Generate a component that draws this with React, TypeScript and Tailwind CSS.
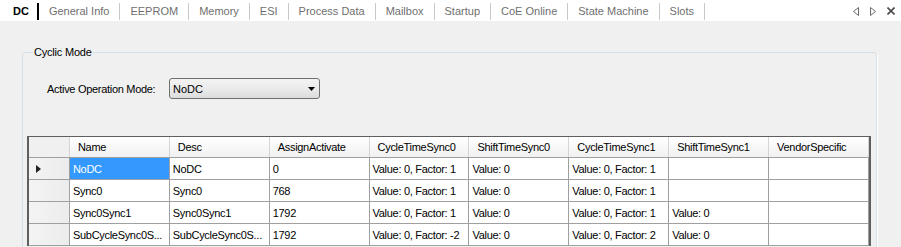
import React from "react";

const tabs = [
  "General Info",
  "EEPROM",
  "Memory",
  "ESI",
  "Process Data",
  "Mailbox",
  "Startup",
  "CoE Online",
  "State Machine",
  "Slots",
];

const columns = [
  "Name",
  "Desc",
  "AssignActivate",
  "CycleTimeSync0",
  "ShiftTimeSync0",
  "CycleTimeSync1",
  "ShiftTimeSync1",
  "VendorSpecific",
];

const rows: string[][] = [
  ["NoDC", "NoDC", "0", "Value: 0, Factor: 1", "Value: 0", "Value: 0, Factor: 1", "", ""],
  ["Sync0", "Sync0", "768", "Value: 0, Factor: 1", "Value: 0", "Value: 0, Factor: 1", "", ""],
  ["Sync0Sync1", "Sync0Sync1", "1792", "Value: 0, Factor: 1", "Value: 0", "Value: 0, Factor: 1", "Value: 0", ""],
  ["SubCycleSync0S...", "SubCycleSync0S...", "1792", "Value: 0, Factor: -2", "Value: 0", "Value: 0, Factor: 2", "Value: 0", ""],
];

const TabBar: React.FC = () => (
  <div className="h-[21px] bg-white flex items-start pl-[3px] text-[11px]">
    <div className="h-[21px] flex items-center pt-[2px] pl-[10px] pr-[8px] font-bold text-black">DC</div>
    <div className="w-[2px] h-[17px] mt-[3px] bg-black" />
    {tabs.map((t) => (
      <React.Fragment key={t}>
        <div className="h-[21px] flex items-center pt-[2px] px-[10px] text-[#6f6f6f]">{t}</div>
        <div className="w-px h-[17px] mt-[3px] bg-[#c9c9c9]" />
      </React.Fragment>
    ))}
    <div className="ml-auto flex items-center h-[21px] pt-[1px] gap-[11px] pr-[6px]">
      <svg width="6" height="9" viewBox="0 0 6 9">
        <path d="M5.5 0.5 L0.5 4.5 L5.5 8.5 Z" fill="none" stroke="#6a6a6a" strokeWidth="1" />
      </svg>
      <svg width="6" height="9" viewBox="0 0 6 9">
        <path d="M0.5 0.5 L5.5 4.5 L0.5 8.5 Z" fill="none" stroke="#6a6a6a" strokeWidth="1" />
      </svg>
      <svg width="8" height="8" viewBox="0 0 8 8">
        <path d="M0.5 0.5 L7.5 7.5 M7.5 0.5 L0.5 7.5" stroke="#4a4a4a" strokeWidth="1.6" />
      </svg>
    </div>
  </div>
);

const ComboBox: React.FC = () => (
  <div className="w-[151px] h-[21px] rounded-[3px] border border-[#707070] bg-gradient-to-b from-[#f3f3f3] via-[#ebebeb] to-[#dcdcdc] flex items-center pt-[1px] pl-[3px] pr-[4px]">
    <span className="flex-1 text-black">NoDC</span>
    <svg width="7" height="4" viewBox="0 0 7 4">
      <path d="M0 0 L7 0 L3.5 4 Z" fill="#000" />
    </svg>
  </div>
);

const Grid: React.FC = () => (
  <div className="w-[844px] border-l-2 border-t border-r-2 border-[#5f5f5f] bg-[#ababab]">
    <div className="flex h-[21px] border-b border-[#a0a0a0] bg-gradient-to-b from-white to-[#f1f1f1]">
      <div className="w-[41px] border-r border-[#d5d5d5] bg-[#f0f0f0]" />
      {columns.map((c) => (
        <div
          key={c}
          className="w-[100px] border-r border-[#d5d5d5] flex items-center pt-[1px] pl-[8px] text-black tracking-[-0.3px]"
        >
          {c}
        </div>
      ))}
    </div>
    {rows.map((r, i) => (
      <div key={i} className="flex h-[22px] border-b border-[#a0a0a0] bg-white">
        <div className="w-[41px] border-r border-[#a0a0a0] bg-gradient-to-r from-[#f4f4f4] to-[#ececec] flex items-center pt-[1px] pl-[7px]">
          {i === 0 && (
            <svg width="5" height="8" viewBox="0 0 5 8">
              <path d="M0 0 L5 4 L0 8 Z" fill="#222" />
            </svg>
          )}
        </div>
        {r.map((v, j) => (
          <div
            key={j}
            className={`w-[100px] border-r border-[#a0a0a0] flex items-center pt-[2px] pl-[3px] whitespace-nowrap overflow-hidden tracking-[-0.3px] ${
              i === 0 && j === 0 ? "bg-[#3399ff] text-white" : "text-black"
            }`}
          >
            {v}
          </div>
        ))}
      </div>
    ))}
  </div>
);

export default function App() {
  return (
    <div className="w-[901px] h-[247px] overflow-hidden bg-[#f0f0f0] font-['Liberation_Sans',Arial,sans-serif] text-[11px] leading-[13px]">
      <TabBar />
      <div className="pl-[22px] pr-[24px] pt-[25px]">
        <fieldset className="border border-[#d5dfe5] rounded-[3px] shadow-[1px_1px_0_#ffffff] pl-[4px] pr-[4px] pb-[20px] m-0">
          <legend className="ml-[6px] px-[1px] text-black tracking-[-0.2px]">Cyclic Mode</legend>
          <div className="flex items-center mt-[19px] pl-[20px]">
            <span className="w-[122px] pt-[1px] text-black tracking-[-0.3px]">Active Operation Mode:</span>
            <ComboBox />
          </div>
          <div className="mt-[37px]">
            <Grid />
          </div>
        </fieldset>
      </div>
    </div>
  );
}
